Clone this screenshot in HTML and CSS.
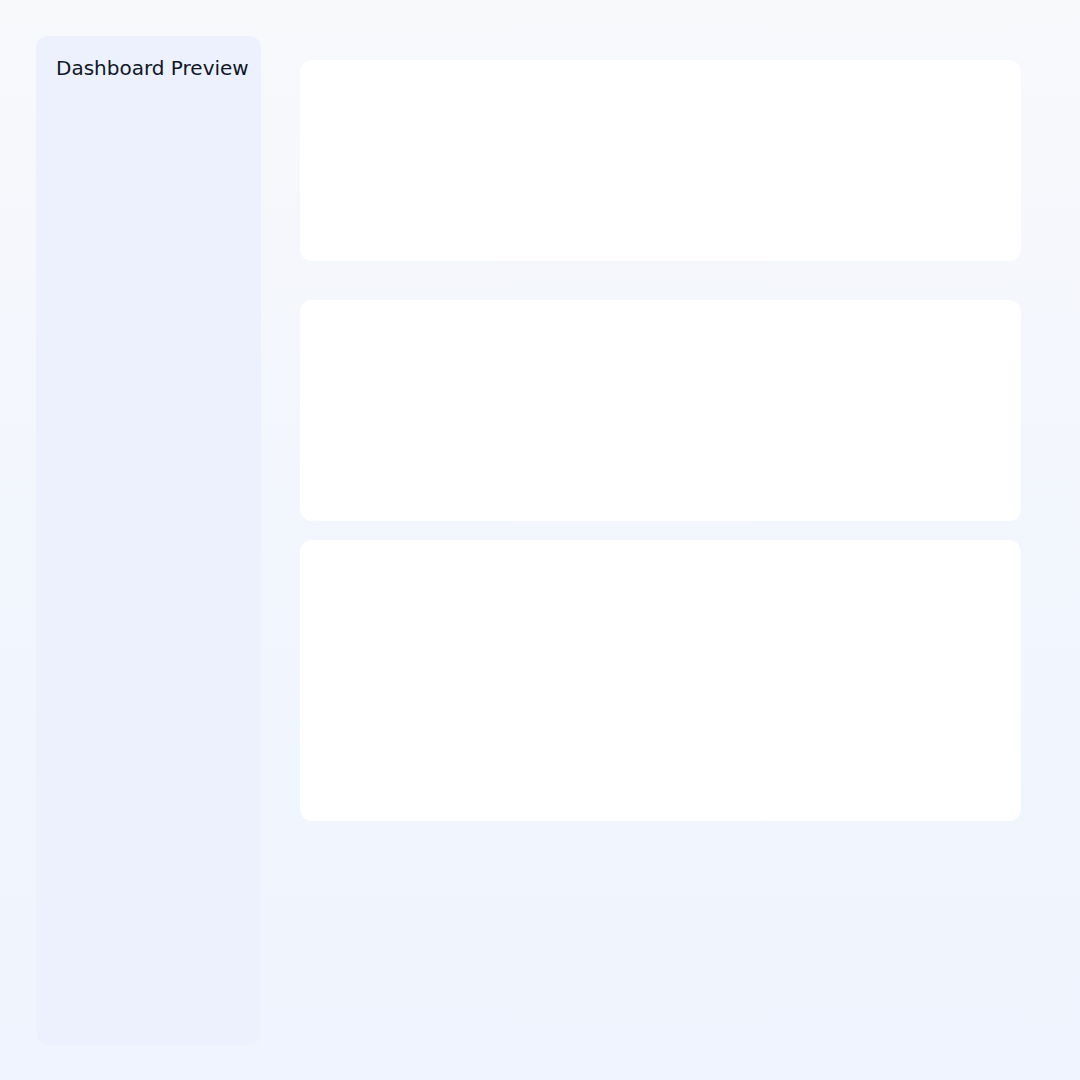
FILE: index.html
```html
<!DOCTYPE html>
<html>
<head>
<meta charset="utf-8">
<link rel="stylesheet" href="styles.css">
</head>
<body>
<div class="layout">
  <aside class="sidebar">
    <h1 class="title">Dashboard Preview</h1>
  </aside>
  <main class="main">
    <section class="card card-a"></section>
    <section class="card card-b"></section>
    <section class="card card-c"></section>
  </main>
</div>
</body>
</html>
```
FILE: styles.css
```css
html, body {
  margin: 0;
  padding: 0;
}
body {
  width: 1080px;
  height: 1080px;
  background: linear-gradient(180deg, #f8f9fb 0%, #f3f6fd 40%, #eff4fe 100%);
  font-family: "DejaVu Sans", sans-serif;
}
.layout {
  display: flex;
  gap: 39px;
  padding: 36px 59px 35px 36px;
  box-sizing: border-box;
  height: 1080px;
}
.sidebar {
  width: 225px;
  flex-shrink: 0;
  background: #edf1fd;
  border-radius: 12px;
  padding: 20px 0 0 20px;
  box-sizing: border-box;
}
.title {
  margin: 0;
  font-size: 20px;
  font-weight: normal;
  color: #0f172a;
  line-height: 24px;
}
.main {
  flex: 1;
  display: flex;
  flex-direction: column;
  padding-top: 24px;
}
.card {
  background: #ffffff;
  border-radius: 12px;
  width: 721px;
}
.card-a { height: 201px; margin-bottom: 39px; }
.card-b { height: 221px; margin-bottom: 19px; }
.card-c { height: 281px; }
```
